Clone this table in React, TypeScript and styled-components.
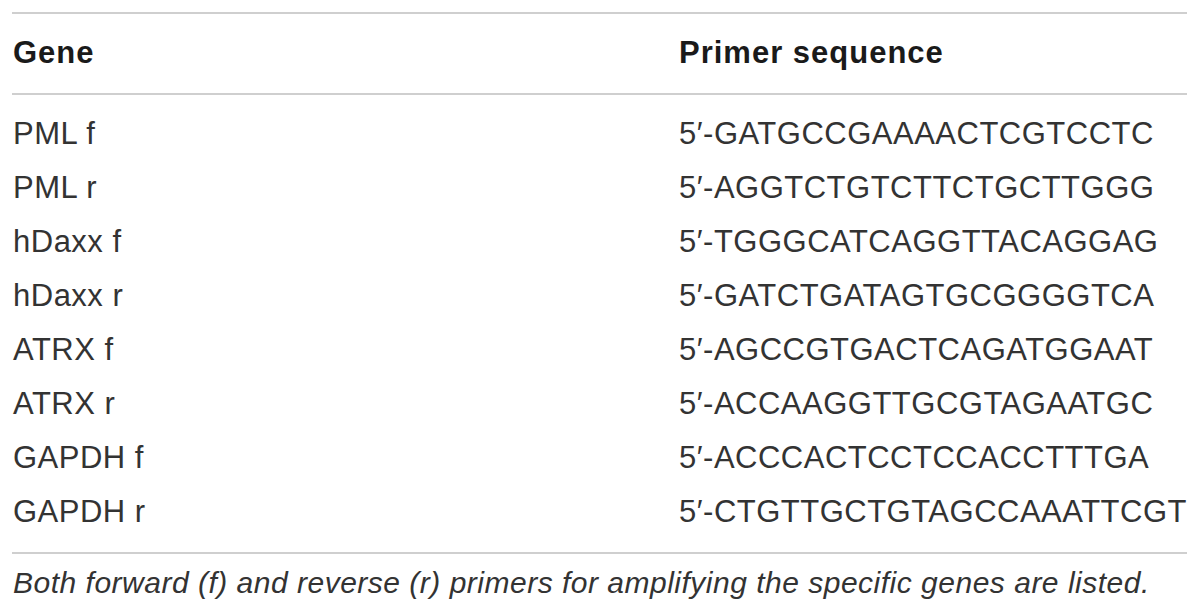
import React from "react";
import styled, { createGlobalStyle } from "styled-components";

const Global = createGlobalStyle`
  html, body { margin: 0; padding: 0; background: #fff; }
  body { font-family: "Liberation Sans", Arial, sans-serif; color: #231f20; }
`;

const Page = styled.div`
  padding: 12px 13px 0 12px;
  width: 1200px;
  box-sizing: border-box;
`;

const Table = styled.div`
  border-top: 2px solid #cfcfcf;
`;

const Row = styled.div<{ $header?: boolean }>`
  display: grid;
  grid-template-columns: 666px 1fr;
  font-size: 31px;
  line-height: 54px;
  letter-spacing: ${(p) => (p.$header ? "1px" : "0.5px")};
  font-weight: ${(p) => (p.$header ? 700 : 400)};
  color: ${(p) => (p.$header ? "#1a1a1a" : "#333")};
  white-space: nowrap;
`;

const Head = styled.div`
  padding: 12px 0 13px;
  border-bottom: 2px solid #cfcfcf;
`;

const Body = styled.div`
  padding: 12px 0 13px;
  border-bottom: 2px solid #cfcfcf;
`;

const Cell = styled.div`
  padding-left: 1px;
`;

const Caption = styled.p`
  margin: 0;
  padding-top: 9px;
  padding-left: 1px;
  font-size: 30px;
  line-height: 40px;
  letter-spacing: 0.5px;
  font-style: italic;
  color: #333;
  white-space: nowrap;
`;

const rows: [string, string][] = [
  ["PML f", "5\u2032-GATGCCGAAAACTCGTCCTC"],
  ["PML r", "5\u2032-AGGTCTGTCTTCTGCTTGGG"],
  ["hDaxx f", "5\u2032-TGGGCATCAGGTTACAGGAG"],
  ["hDaxx r", "5\u2032-GATCTGATAGTGCGGGGTCA"],
  ["ATRX f", "5\u2032-AGCCGTGACTCAGATGGAAT"],
  ["ATRX r", "5\u2032-ACCAAGGTTGCGTAGAATGC"],
  ["GAPDH f", "5\u2032-ACCCACTCCTCCACCTTTGA"],
  ["GAPDH r", "5\u2032-CTGTTGCTGTAGCCAAATTCGT"],
];

export default function App() {
  return (
    <Page>
      <Global />
      <Table>
        <Head>
          <Row $header>
            <Cell>Gene</Cell>
            <Cell>Primer sequence</Cell>
          </Row>
        </Head>
        <Body>
          {rows.map(([g, s]) => (
            <Row key={g}>
              <Cell>{g}</Cell>
              <Cell>{s}</Cell>
            </Row>
          ))}
        </Body>
      </Table>
      <Caption>
        Both forward (f) and reverse (r) primers for amplifying the specific genes are listed.
      </Caption>
    </Page>
  );
}
